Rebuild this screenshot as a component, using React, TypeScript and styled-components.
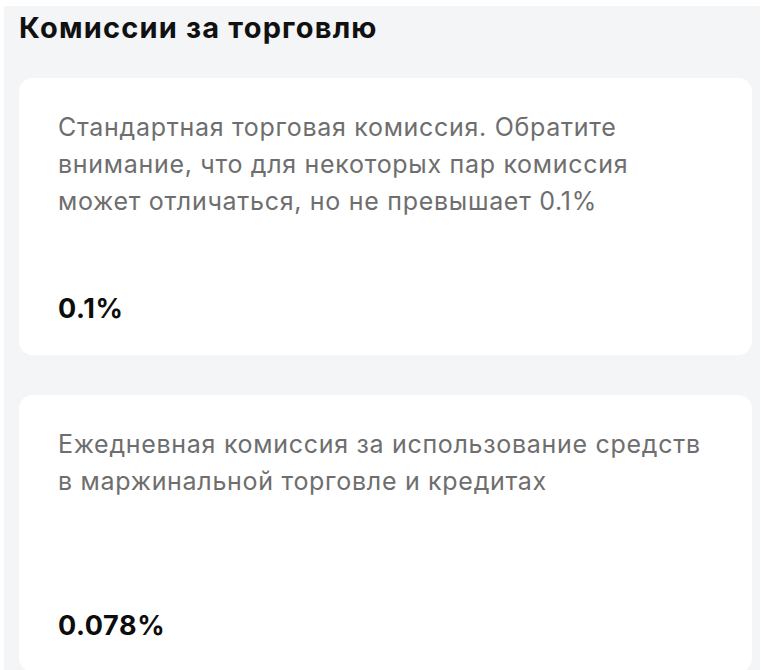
import styled, { createGlobalStyle } from 'styled-components';

const GlobalStyle = createGlobalStyle`
  html, body {
    margin: 0;
    padding: 0;
    background: #ffffff;
  }
  body {
    font-family: Inter, 'Noto Sans', sans-serif;
    -webkit-font-smoothing: antialiased;
  }
`;

const Panel = styled.section`
  margin: 6px 1px 0 4px;
  padding: 5px 8px 0 15px;
  min-height: 664px;
  box-sizing: border-box;
  background: #f4f5f7;
  display: flex;
  flex-direction: column;
`;

const Title = styled.h2`
  margin: 0 0 33px;
  font-family: Inter, sans-serif;
  font-weight: 700;
  font-size: 29px;
  line-height: 34px;
  letter-spacing: 1.2px;
  color: #111111;
`;

const CardList = styled.div`
  display: flex;
  flex-direction: column;
  gap: 40px;
`;

const Card = styled.div`
  background: #ffffff;
  border-radius: 14px;
  padding: 31px 39px 30px;
  display: flex;
  flex-direction: column;
`;

const Description = styled.p`
  margin: 0;
  min-height: 111px;
  font-family: Inter, 'Noto Sans', sans-serif;
  font-size: 25px;
  line-height: 37px;
  letter-spacing: 0.7px;
  color: #6e6e6e;
  white-space: nowrap;
`;

const Rate = styled.div`
  margin-top: 73px;
  font-family: Inter, sans-serif;
  font-weight: 700;
  font-size: 27px;
  line-height: 32px;
  letter-spacing: 0.6px;
  color: #0d0d0d;
`;

const fees = [
  {
    id: 'standard',
    text: (
      <>
        Стандартная торговая комиссия. Обратите
        <br />
        внимание, что для некоторых пар комиссия
        <br />
        может отличаться, но не превышает 0.1%
      </>
    ),
    rate: '0.1%',
  },
  {
    id: 'margin',
    text: (
      <>
        Ежедневная комиссия за использование средств
        <br />
        в маржинальной торговле и кредитах
      </>
    ),
    rate: '0.078%',
  },
];

export default function App() {
  return (
    <>
      <GlobalStyle />
      <Panel>
        <Title>Комиссии за торговлю</Title>
        <CardList>
          {fees.map((fee) => (
            <Card key={fee.id}>
              <Description>{fee.text}</Description>
              <Rate>{fee.rate}</Rate>
            </Card>
          ))}
        </CardList>
      </Panel>
    </>
  );
}
